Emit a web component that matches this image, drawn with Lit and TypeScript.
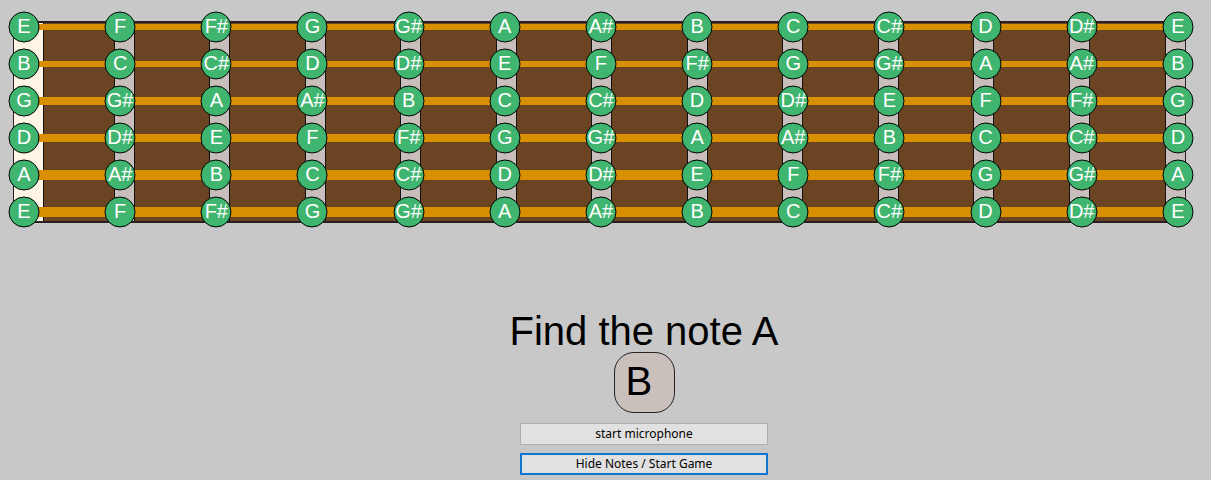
import { LitElement, html, css } from "lit";
import { customElement, property, state } from "lit/decorators.js";

const SCALE = ["C", "C#", "D", "D#", "E", "F", "F#", "G", "G#", "A", "A#", "B"];
const FRETS = 12;

interface GuitarString {
  open: string;
  gauge: "light" | "medium" | "heavy";
}

// Standard tuning, highest string first.
const STRINGS: GuitarString[] = [
  { open: "E", gauge: "light" },
  { open: "B", gauge: "light" },
  { open: "G", gauge: "medium" },
  { open: "D", gauge: "medium" },
  { open: "A", gauge: "heavy" },
  { open: "E", gauge: "heavy" },
];

const noteAt = (open: string, fret: number) =>
  SCALE[(SCALE.indexOf(open) + fret) % SCALE.length];

@customElement("note-dot")
export class NoteDot extends LitElement {
  @property() note = "";

  static styles = css`
    :host {
      display: grid;
      grid-template-columns: 32px;
      justify-items: center;
      width: 32px;
      height: 32px;
      color: #fff;
      font-size: 20px;
      line-height: 30px;
    }
    svg,
    span {
      grid-area: 1 / 1;
    }
    svg {
      display: block;
    }
    circle {
      fill: #3fb56f;
      stroke: #000;
    }
  `;

  render() {
    return html`
      <svg width="32" height="32" viewBox="0 0 32 32" aria-hidden="true">
        <circle cx="16" cy="16" r="15"></circle>
      </svg>
      <span>${this.note}</span>
    `;
  }
}

@customElement("fret-board")
export class FretBoard extends LitElement {
  @property({ type: Boolean }) notes = false;

  static styles = css`
    :host {
      display: grid;
    }
    .neck,
    .strings {
      grid-area: 1 / 1;
    }
    .neck {
      display: grid;
      margin: 10px 8px 5px 5px;
      border: 1px solid #2a2022;
      border-width: 2px 1px;
      background: #6b4423;
      box-sizing: border-box;
    }
    .nut,
    .frets {
      grid-area: 1 / 1;
    }
    .nut {
      width: 29px;
      border-right: 1px solid #111;
      background: #fff5e6;
    }
    .frets {
      display: grid;
      grid-template-columns: repeat(12, 1fr);
      padding-left: 25px;
    }
    .fret {
      justify-self: end;
      width: 19px;
      border: solid #111;
      border-width: 0 1px;
      background: #c8bfbc;
    }
    .fret:last-child {
      border-right: 0;
    }
    .strings {
      display: grid;
      row-gap: 5px;
    }
    .string {
      display: grid;
      align-items: center;
      height: 32px;
    }
    .wire,
    .row {
      grid-area: 1 / 1;
    }
    .wire {
      margin: 0 16px;
      background: #d99000;
    }
    .light {
      height: 6px;
    }
    .medium {
      height: 8px;
    }
    .heavy {
      height: 10px;
    }
    .row {
      display: flex;
      justify-content: space-between;
    }
  `;

  render() {
    const frets = Array.from({ length: FRETS }, (_, i) => i);
    const positions = [...frets, FRETS];
    return html`
      <div class="neck">
        <div class="frets">${frets.map(() => html`<div class="fret"></div>`)}</div>
        <div class="nut"></div>
      </div>
      <div class="strings">
        ${STRINGS.map(
          (s) => html`
            <div class="string">
              <div class="wire ${s.gauge}"></div>
              <div class="row">
                ${this.notes
                  ? positions.map((f) => html`<note-dot .note=${noteAt(s.open, f)}></note-dot>`)
                  : null}
              </div>
            </div>
          `
        )}
      </div>
    `;
  }
}

@customElement("app-root")
export class AppRoot extends LitElement {
  @state() private notesShown = true;
  @state() private target = "A";
  @state() private heard = "B";

  static styles = css`
    :host {
      display: block;
      box-sizing: border-box;
      min-height: 100vh;
      padding: 11px 17px 4px 8px;
      background: #c8c8c8;
      color: #000;
      font-family: "Liberation Sans", Arial, sans-serif;
    }
    .panel {
      display: flex;
      flex-direction: column;
      align-items: center;
      margin-top: 82px;
      padding-left: 86px;
    }
    .prompt {
      margin: 0;
      font-size: 40px;
      font-weight: 400;
      line-height: 42px;
    }
    .heard {
      box-sizing: border-box;
      width: 61px;
      height: 61px;
      padding-left: 11px;
      border: 1px solid #222;
      border-radius: 20px;
      background: #c9c0bc;
      font-size: 40px;
      line-height: 56px;
    }
    .actions {
      display: grid;
      gap: 8px;
      width: 248px;
      margin-top: 10px;
    }
    button {
      height: 22px;
      padding: 0;
      border: 1px solid #adadad;
      background: #e1e1e1;
      color: #000;
      font-family: "Noto Sans", sans-serif;
      font-size: 12px;
      line-height: 18px;
    }
    .primary {
      border: 2px solid #0f77cf;
    }
  `;

  private toggleNotes() {
    this.notesShown = !this.notesShown;
  }

  render() {
    return html`
      <fret-board ?notes=${this.notesShown}></fret-board>
      <main class="panel">
        <h1 class="prompt">Find the note ${this.target}</h1>
        <output class="heard" aria-label="Detected note">${this.heard}</output>
        <div class="actions">
          <button type="button">start microphone</button>
          <button type="button" class="primary" @click=${this.toggleNotes}>
            ${this.notesShown ? "Hide Notes / Start Game" : "Show Notes / Stop Game"}
          </button>
        </div>
      </main>
    `;
  }
}
